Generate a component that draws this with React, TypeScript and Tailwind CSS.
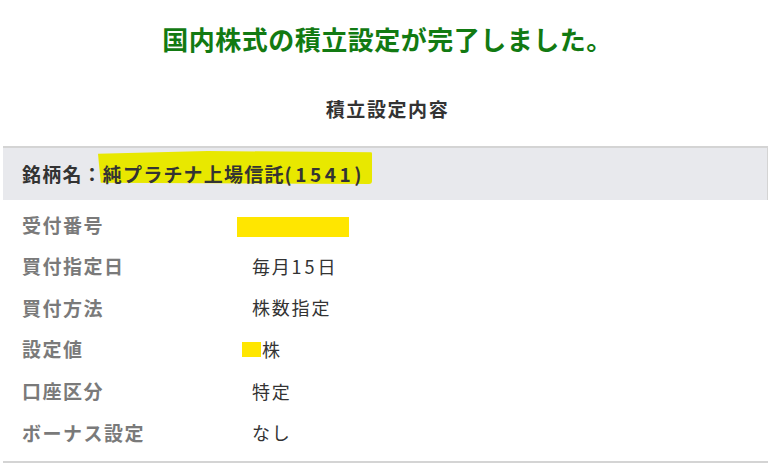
const rows: { label: string; value: React.ReactNode }[] = [
  {
    label: "受付番号",
    value: <span className="ml-[-15px] inline-block h-[20px] w-[112px] bg-[#ffe600] align-middle" />,
  },
  { label: "買付指定日", value: <>毎月<span className="tracking-[3px]">15</span>日</> },
  { label: "買付方法", value: "株数指定" },
  {
    label: "設定値",
    value: (
      <span className="inline-flex items-center">
        <span className="ml-[-10px] inline-block h-[15px] w-[19px] bg-[#ffe600]" />
        <span className="ml-[1px]">株</span>
      </span>
    ),
  },
  { label: "口座区分", value: "特定" },
  { label: "ボーナス設定", value: "なし" },
];

export default function App() {
  return (
    <div
      className="min-h-[468px] w-[775px] bg-white"
      style={{ fontFamily: '"Noto Sans CJK JP", "Noto Sans", sans-serif' }}
    >
      <h1 className="pt-[21px] text-center text-[26px] leading-[36px] font-bold tracking-[0.5px] text-[#127a12]">
        国内株式の積立設定が完了しました。
      </h1>

      <h2 className="mt-[38px] text-center text-[19px] leading-[28px] font-bold tracking-[1.6px] text-[#333]">
        積立設定内容
      </h2>

      <div className="mx-[3px] mt-[23px] w-[765px] border-b-2 border-[#d4d4d4]">
        <div className="relative flex h-[54px] items-center border-t-2 border-r border-[#d4d4d4] bg-[#e8e9ed] pl-[19px]">
          <div className="absolute top-[3px] left-[95px] h-[33px] w-[274px] rounded-[3px] bg-[#e8e800] [clip-path:polygon(0_8%,40%_0,100%_4%,100%_100%,1%_96%)]" />
          <span className="relative text-[19px] leading-[24px] font-bold tracking-[1.2px] text-[#333]">
            銘柄名：純プラチナ上場信託<span className="tracking-[3.5px]">(1541)</span>
          </span>
        </div>

        <div className="pt-[4px] pb-[7px]">
          {rows.map((row) => (
            <div key={row.label} className="flex h-[41.6px] items-center pl-[19px]">
              <div className="w-[230px] text-[19px] font-bold tracking-[1.5px] text-[#7a7a7a]">
                {row.label}
              </div>
              <div className="text-[18px] tracking-[1.8px] text-[#333]">{row.value}</div>
            </div>
          ))}
        </div>
      </div>
    </div>
  );
}
